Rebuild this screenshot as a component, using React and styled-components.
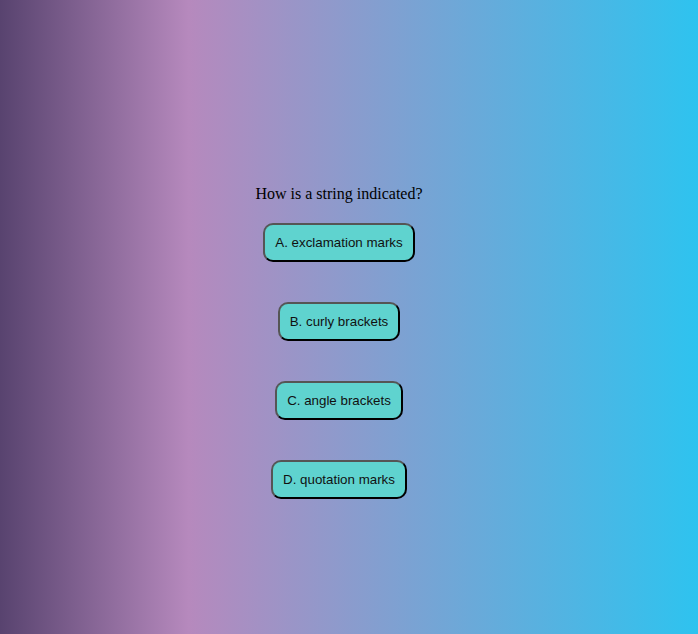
import styled, { createGlobalStyle } from "styled-components";

const GlobalStyle = createGlobalStyle`
  html, body {
    margin: 0;
    padding: 0;
  }
  body {
    min-height: 100vh;
    background: linear-gradient(to right, #58436f 0%, #b689bd 27%, #2ec3ef 100%);
  }
`;

const Page = styled.div`
  min-height: 100vh;
  display: flex;
  flex-direction: column;
  align-items: center;
  padding: 185px 20px 0 0;
  box-sizing: border-box;
`;

const Question = styled.p`
  margin: 0 0 20px;
  font-family: "Liberation Serif", "Times New Roman", serif;
  font-size: 16px;
  line-height: 18px;
  color: #000;
`;

const Answers = styled.div`
  display: flex;
  flex-direction: column;
  align-items: center;
  gap: 40px;
`;

const AnswerButton = styled.button`
  font-family: "Liberation Sans", Arial, sans-serif;
  font-size: 13.333px;
  line-height: 17px;
  color: #111;
  background: #5fd3cf;
  border: 2px outset #000;
  border-color: #555 #000 #000 #555;
  border-radius: 10px;
  padding: 9px 10px;
  cursor: pointer;
`;

const answers = [
  "A. exclamation marks",
  "B. curly brackets",
  "C. angle brackets",
  "D. quotation marks",
];

export default function App() {
  return (
    <>
      <GlobalStyle />
      <Page>
        <Question>How is a string indicated?</Question>
        <Answers>
          {answers.map((a) => (
            <AnswerButton key={a}>{a}</AnswerButton>
          ))}
        </Answers>
      </Page>
    </>
  );
}
